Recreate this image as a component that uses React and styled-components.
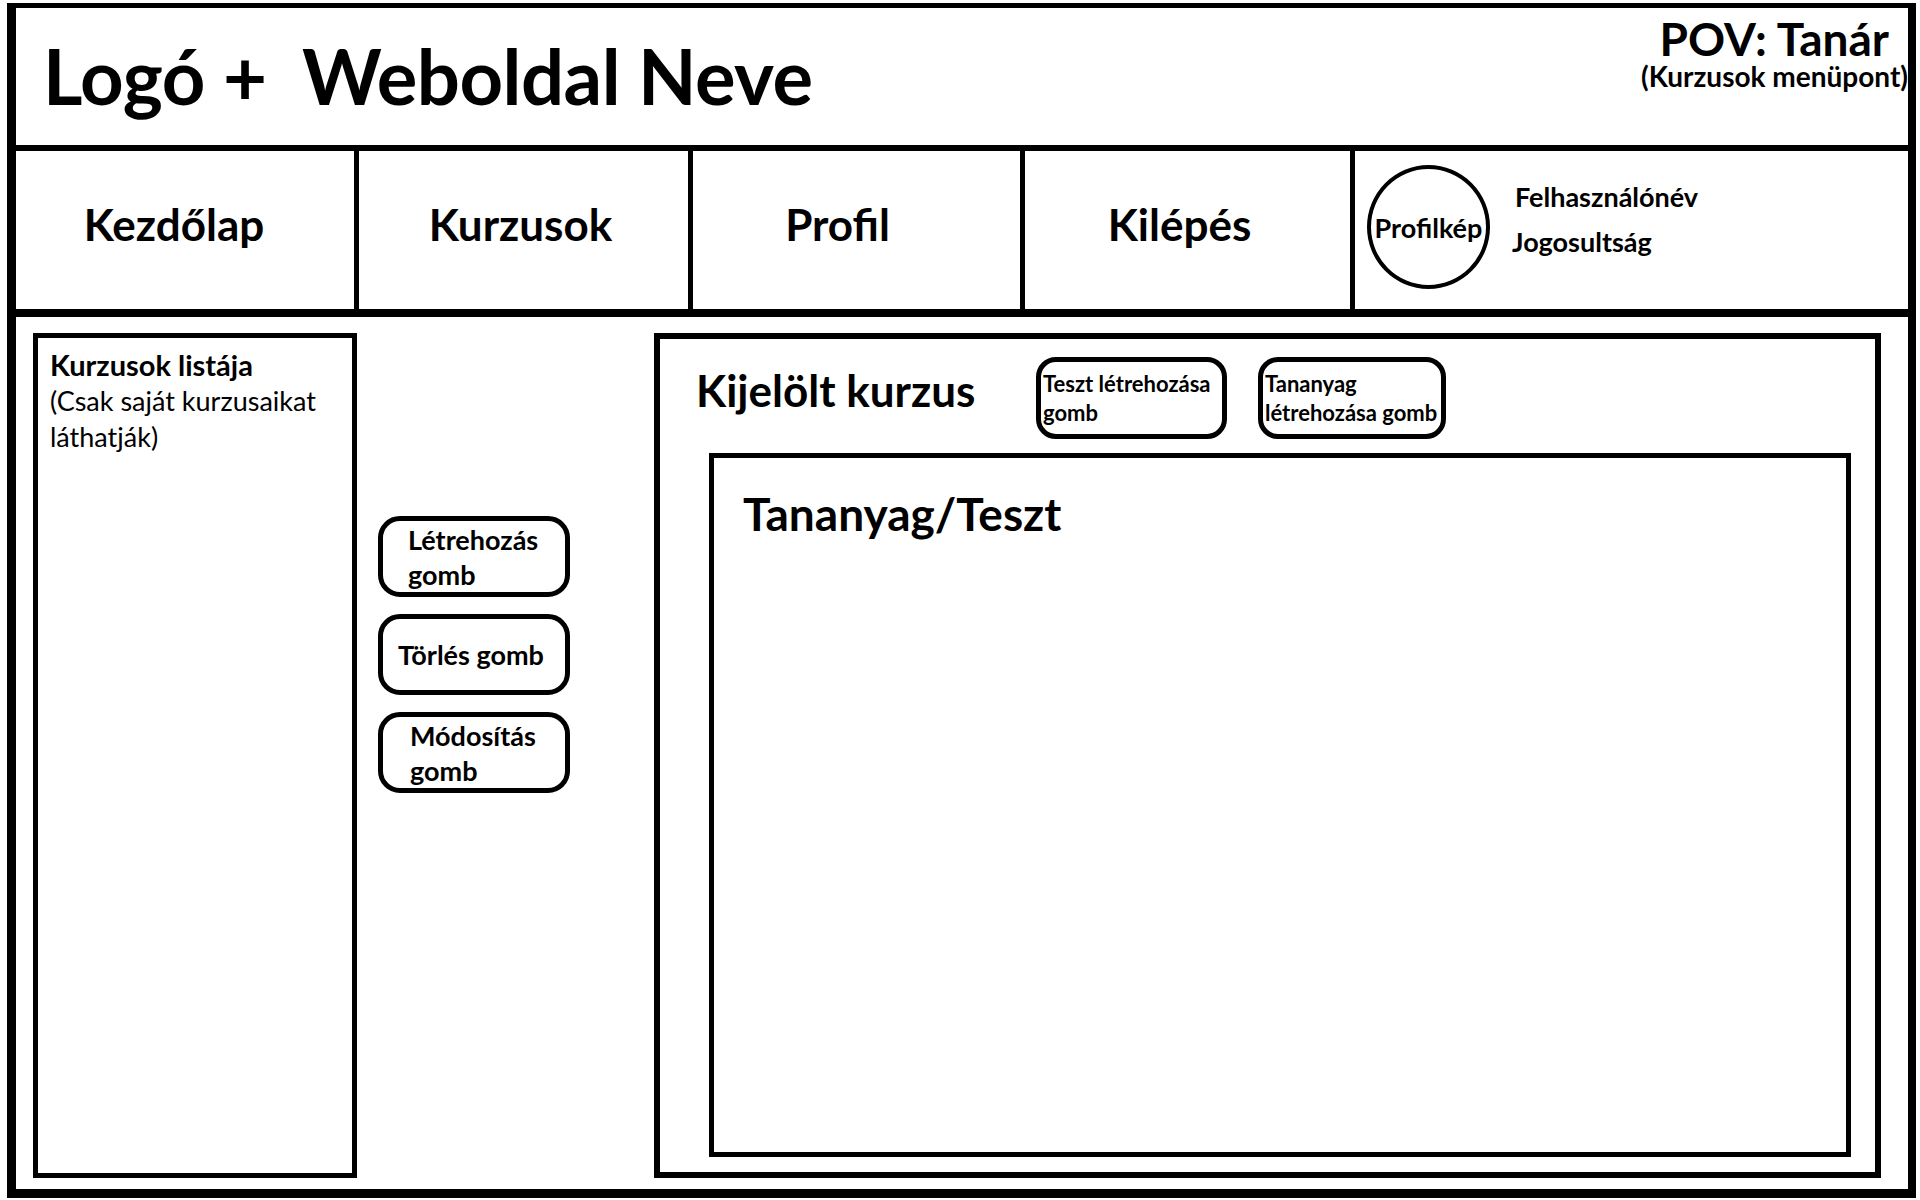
import styled, { createGlobalStyle } from "styled-components";

const GlobalStyle = createGlobalStyle`
  html, body {
    margin: 0;
    padding: 0;
    background: #ffffff;
  }
  body {
    font-family: Lato, "Open Sans", sans-serif;
    color: #000000;
  }
  * {
    box-sizing: border-box;
  }
`;

const Frame = styled.div`
  margin: 3px 0 0 7px;
  width: 1909px;
  height: 1195px;
  border-style: solid;
  border-color: #000;
  border-width: 5px 8px 9px 9px;
  display: flex;
  flex-direction: column;
`;

const Header = styled.header`
  height: 143px;
  border-bottom: 6px solid #000;
  display: flex;
  justify-content: space-between;
  padding-left: 27px;
`;

const Title = styled.h1`
  margin: 0;
  padding-top: 22px;
  font-size: 76px;
  font-weight: 700;
  white-space: pre;
  letter-spacing: -0.5px;
`;

const Pov = styled.div`
  display: flex;
  flex-direction: column;
  align-items: flex-end;
  padding-top: 8px;
`;

const PovTitle = styled.div`
  font-size: 46px;
  font-weight: 700;
  line-height: 46px;
  margin-right: 19px;
`;

const PovSub = styled.div`
  font-size: 28px;
  font-weight: 700;
  line-height: 28px;
  white-space: nowrap;
`;

const Nav = styled.nav`
  height: 166px;
  border-bottom: 8px solid #000;
  display: flex;
`;

const NavCell = styled.div`
  width: ${(p) => p.$w}px;
  border-right: 5px solid #000;
  display: flex;
  align-items: center;
  justify-content: center;
  padding-right: ${(p) => p.$shift || 0}px;
  padding-bottom: 12px;
  font-size: 44px;
  font-weight: 700;
`;

const ProfileCell = styled.div`
  flex: 1;
  display: flex;
  align-items: center;
  padding-left: 12px;
`;

const Avatar = styled.div`
  width: 123px;
  height: 124px;
  margin-top: -6px;
  border: 4px solid #000;
  border-radius: 50%;
  display: flex;
  align-items: center;
  justify-content: center;
  font-size: 27px;
  font-weight: 700;
  white-space: nowrap;
`;

const UserInfo = styled.div`
  display: flex;
  flex-direction: column;
  gap: 13px;
  margin-left: 22px;
  margin-top: -22px;
`;

const UserLine = styled.div`
  font-size: 27px;
  font-weight: 700;
  line-height: 32px;
  margin-left: ${(p) => p.$indent || 0}px;
`;

const Main = styled.main`
  flex: 1;
  display: flex;
  padding: 16px 27px 11px 17px;
`;

const ListPanel = styled.section`
  width: 324px;
  border: 5px solid #000;
  padding: 9px 0 0 12px;
`;

const ListTitle = styled.div`
  font-size: 29px;
  font-weight: 700;
  line-height: 36px;
`;

const ListNote = styled.div`
  font-size: 27px;
  font-weight: 400;
  line-height: 36px;
  width: 290px;
`;

const ActionColumn = styled.div`
  width: 192px;
  margin-left: 21px;
  padding-top: 183px;
  display: flex;
  flex-direction: column;
  gap: 17px;
`;

const ActionButton = styled.button`
  height: 81px;
  border: 5px solid #000;
  border-radius: 22px;
  background: #fff;
  font-family: inherit;
  font-size: 27px;
  font-weight: 700;
  line-height: 35px;
  color: #000;
  text-align: left;
  padding: 0 0 0 ${(p) => p.$pad}px;
`;

const CoursePanel = styled.section`
  flex: 1;
  margin-left: 84px;
  border: 6px solid #000;
  display: flex;
  flex-direction: column;
  padding: 18px 24px 15px 49px;
`;

const CourseHead = styled.div`
  display: flex;
  align-items: center;
`;

const CourseTitle = styled.h2`
  margin: -16px 0 0 -13px;
  font-size: 44px;
  font-weight: 700;
  width: 340px;
`;

const SmallButton = styled.button`
  width: ${(p) => p.$w}px;
  height: 82px;
  margin-left: ${(p) => p.$gap}px;
  border: 5px solid #000;
  border-radius: 20px;
  background: #fff;
  font-family: inherit;
  font-size: 22px;
  font-weight: 700;
  line-height: 29px;
  color: #000;
  text-align: left;
  white-space: nowrap;
  padding: 0 0 0 2px;
`;

const ContentBox = styled.div`
  flex: 1;
  margin-top: 14px;
  border: 5px solid #000;
  padding: 28px 0 0 29px;
`;

const ContentTitle = styled.h3`
  margin: 0;
  font-size: 46px;
  font-weight: 700;
`;

const navItems = [
  { label: "Kezdőlap", w: 343, shift: 22 },
  { label: "Kurzusok", w: 334, shift: 6 },
  { label: "Profil", w: 332, shift: 38 },
  { label: "Kilépés", w: 330, shift: 16 },
];

export default function App() {
  return (
    <>
      <GlobalStyle />
      <Frame>
        <Header>
          <Title>{"Logó +  Weboldal Neve"}</Title>
          <Pov>
            <PovTitle>POV: Tanár</PovTitle>
            <PovSub>(Kurzusok menüpont)</PovSub>
          </Pov>
        </Header>
        <Nav>
          {navItems.map((item) => (
            <NavCell key={item.label} $w={item.w} $shift={item.shift}>
              {item.label}
            </NavCell>
          ))}
          <ProfileCell>
            <Avatar>Profilkép</Avatar>
            <UserInfo>
              <UserLine $indent={3}>Felhasználónév</UserLine>
              <UserLine>Jogosultság</UserLine>
            </UserInfo>
          </ProfileCell>
        </Nav>
        <Main>
          <ListPanel>
            <ListTitle>Kurzusok listája</ListTitle>
            <ListNote>(Csak saját kurzusaikat láthatják)</ListNote>
          </ListPanel>
          <ActionColumn>
            <ActionButton $pad={25}>
              Létrehozás
              <br />
              gomb
            </ActionButton>
            <ActionButton $pad={15}>Törlés gomb</ActionButton>
            <ActionButton $pad={27}>
              Módosítás
              <br />
              gomb
            </ActionButton>
          </ActionColumn>
          <CoursePanel>
            <CourseHead>
              <CourseTitle>Kijelölt kurzus</CourseTitle>
              <SmallButton $w={191} $gap={0}>
                Teszt létrehozása
                <br />
                gomb
              </SmallButton>
              <SmallButton $w={188} $gap={31}>
                Tananyag
                <br />
                létrehozása gomb
              </SmallButton>
            </CourseHead>
            <ContentBox>
              <ContentTitle>Tananyag/Teszt</ContentTitle>
            </ContentBox>
          </CoursePanel>
        </Main>
      </Frame>
    </>
  );
}
